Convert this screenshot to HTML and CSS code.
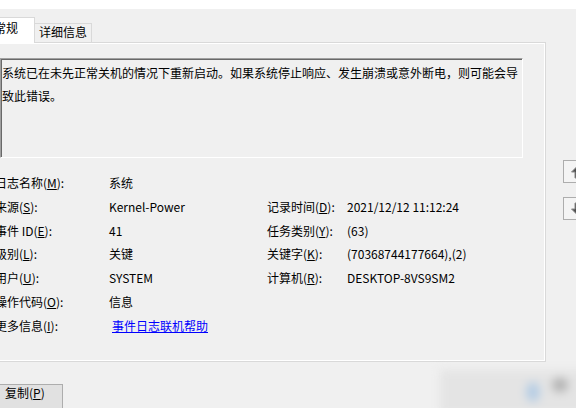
FILE: index.html
```html
<!DOCTYPE html>
<html lang="zh-CN">
<head>
  <meta charset="UTF-8" />
  <title>事件属性 - 事件 41, Kernel-Power</title>
  <link rel="stylesheet" href="styles.css">
</head>
<body>
  <div class="topbar"></div>

  <div class="tabs">
    <div class="tab on">常规</div>
    <div class="tab">详细信息</div>
  </div>

  <div class="row">
    <div class="panel">
      <div class="desc">系统已在未先正常关机的情况下重新启动。如果系统停止响应、发生崩溃或意外断电，则可能会导致此错误。</div>

      <div class="info">
        <span>日志名称(<u>M</u>):</span><span>系统</span><span></span><span></span>
        <span>来源(<u>S</u>):</span><span>Kernel-Power</span><span>记录时间(<u>D</u>):</span><span>2021/12/12 11:12:24</span>
        <span>事件 ID(<u>E</u>):</span><span>41</span><span>任务类别(<u>Y</u>):</span><span>(63)</span>
        <span>级别(<u>L</u>):</span><span>关键</span><span>关键字(<u>K</u>):</span><span>(70368744177664),(2)</span>
        <span>用户(<u>U</u>):</span><span>SYSTEM</span><span>计算机(<u>R</u>):</span><span>DESKTOP-8VS9SM2</span>
        <span>操作代码(<u>O</u>):</span><span>信息</span><span></span><span></span>
        <span>更多信息(<u>I</u>):</span><span><a class="link" href="#">事件日志联机帮助</a></span><span></span><span></span>
      </div>
    </div>

    <div class="side">
      <div class="navbtn">
        <svg width="16" height="16" viewBox="0 0 16 16"><path d="M8 1.5 L14.5 8 L11 8 L11 14 L5 14 L5 8 L1.5 8 Z" fill="#4f4f4f" stroke="#8a8a8a" stroke-width="1"/></svg>
      </div>
      <div class="navbtn">
        <svg width="16" height="16" viewBox="0 0 16 16"><path d="M8 14.5 L14.5 8 L11 8 L11 2 L5 2 L5 8 L1.5 8 Z" fill="#4f4f4f" stroke="#8a8a8a" stroke-width="1"/></svg>
      </div>
    </div>
  </div>

  <button class="copy">复制(<u>P</u>)</button>

  <!-- blurred taskbar corner -->
  <div class="haze">
    <div class="blob blue"></div>
    <div class="blob dark"></div>
  </div>
</body>
</html>
```

FILE: styles.css
```css
body {
  margin: 0;
  width: 576px;
  height: 408px;
  overflow: hidden;
  position: relative;
  background: #f0f0f0;
  color: #000;
  font-family: "Noto Sans CJK SC", "Liberation Sans", sans-serif;
  font-size: 12px;
}
.topbar {
  height: 9px;
  background: #fff;
  margin-bottom: 8px;
}
.tabs {
  display: flex;
  align-items: flex-end;
  margin-left: -12px;
  height: 25px;
}
.tab {
  box-sizing: border-box;
  width: 57px;
  height: 19px;
  border: 1px solid #d9d9d9;
  border-left: none;
  border-bottom: none;
  padding-left: 4px;
  line-height: 13px;
  padding-top: 1px;
}
.tab.on {
  width: 47px;
  height: 26px;
  margin-bottom: -1px;
  background: #fff;
  border-left: 1px solid #d9d9d9;
  padding-left: 5px;
  padding-top: 3px;
  position: relative;
  z-index: 1;
}
.row {
  display: flex;
  margin-left: -9px;
}
.panel {
  flex-shrink: 0;
  box-sizing: border-box;
  width: 555px;
  height: 320px;
  border: 1px solid #d9d9d9;
  box-shadow: inset 0 0 0 1px #fff;
  padding: 15px 0 0 8px;
}
.desc {
  box-sizing: border-box;
  width: 523px;
  height: 100px;
  border: 1px solid;
  border-color: #a0a0a0 #fff #fff #a0a0a0;
  box-shadow: inset 1px 1px 0 #696969;
  padding: 2px 0 0 1px;
  line-height: 23px;
}
.info {
  display: grid;
  grid-template-columns: 114px 158px 80px auto;
  grid-auto-rows: 23.83px;
  align-items: center;
  margin: 13px 0 0 -5px;
  white-space: nowrap;
  line-height: 16px;
}
.link {
  color: #0000ff;
  margin-left: 3px;
}
.side {
  flex-shrink: 0;
  margin: 118px 0 0 17px;
  display: flex;
  flex-direction: column;
  gap: 14px;
}
.navbtn {
  box-sizing: border-box;
  width: 26px;
  height: 23px;
  border: 1px solid #adadad;
  background: #f4f4f4;
  padding: 3px 0 0 6px;
}
.navbtn svg {
  display: block;
}
.copy {
  display: block;
  box-sizing: border-box;
  margin: 22px 0 0 -12px;
  width: 75px;
  height: 30px;
  border: 1px solid #adadad;
  background: #e1e1e1;
  font: inherit;
  color: #000;
  text-align: left;
  padding: 1px 0 14px 16px;
  line-height: 13px;
}
.haze {
  position: absolute;
  left: 440px;
  top: 370px;
  width: 150px;
  height: 45px;
  background: #e4e4e4;
  filter: blur(5px);
}
.blob {
  position: absolute;
  border-radius: 50%;
}
.blue {
  left: 86px;
  top: 12px;
  width: 14px;
  height: 20px;
  background: #b4cce4;
}
.dark {
  left: 112px;
  top: 8px;
  width: 16px;
  height: 14px;
  background: #b0b0b0;
}
```
